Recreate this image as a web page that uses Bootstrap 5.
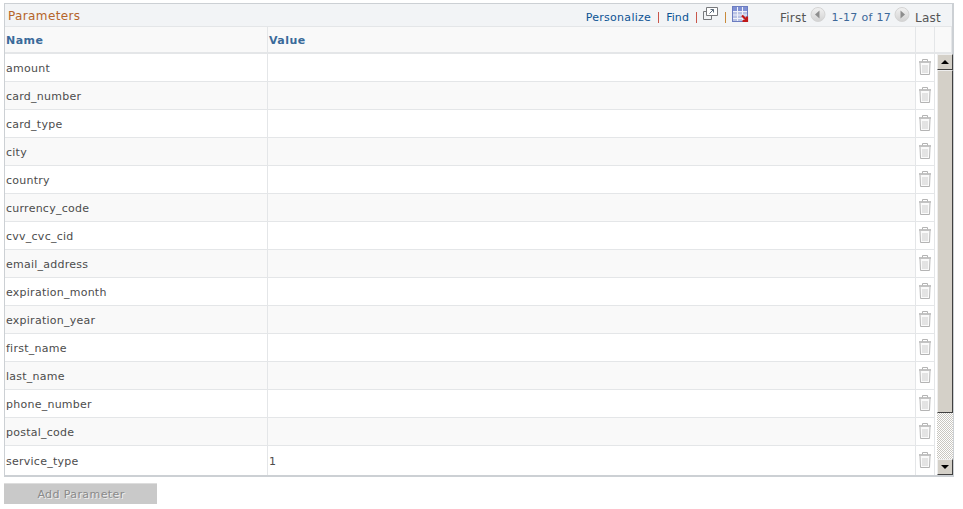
<!DOCTYPE html>
<html lang="en">
<head>
<meta charset="utf-8">
<title>Parameters</title>
<link href="https://cdn.jsdelivr.net/npm/bootstrap@5.3.0/dist/css/bootstrap.min.css" rel="stylesheet">
<style>
html,body{height:509px;overflow:hidden;background:#fff}
body{font-family:"DejaVu Sans",sans-serif;font-size:11px;color:#444;padding:3px 0 0 4px;margin:0}
.grid-box{width:950px;border:1px solid #ccd0d4;border-right-width:2px;border-bottom-width:2px}
.title-bar{height:23px;background:#f2f4f6;border-bottom:1px solid #e4e6e8;padding:0 11px 0 3px}
.title-text{color:#b5642a;font-size:12px;letter-spacing:.38px;line-height:24px}
.tools{height:22px;align-items:flex-start}
.tools a,.pg-count,.pg-word{display:block;margin-top:7px;line-height:14px}
.tools a{color:#0b5394;text-decoration:none;font-size:11px;letter-spacing:.28px}
.tools a.find-link{letter-spacing:.05px}
.sep-bar{display:block;width:1px;height:11px;margin:8px 7px 0 7px;background:#c9564a}
.sep-pop{margin-right:6px}
.sep-last{background:#c98a3a;margin-right:6px;margin-left:7px}
.pg-word{font-family:"DejaVu Sans",sans-serif;font-size:12px;color:#555;letter-spacing:.25px}
.pg-count{color:#3c6899;margin-left:5px;margin-right:3px;letter-spacing:.3px}
.pg-last{margin-left:5px}
.ic-pop{margin-top:3px}
.ic-grid{margin-top:2px;margin-right:31px}
.ic-circle{margin-top:3px}
.ic-first{margin-left:4px}
.ic-trash{margin-bottom:2px}
table.params{table-layout:fixed;width:947px;border-collapse:separate;border-spacing:0;margin:0}
table.params th,table.params td{padding:0 0 0 1px;border-right:1px solid #e4e6e8;vertical-align:middle;color:#4c4c4c;font-size:11px;line-height:16px;font-weight:400;letter-spacing:.25px;box-shadow:none;background:transparent}
table.params thead th{height:27px;padding-top:2px;background:#f9f9f9;color:#3a6a9a;font-weight:700;letter-spacing:.45px;border-bottom:2px solid #e4e6e8;box-shadow:none}
table.params tbody td{height:28px;padding-top:2px;border-bottom:1px solid #e4e6e8}
table.params tbody tr.alt td{background:#f9f9f9}
table.params tbody tr.last-row td{height:29px;border-bottom:0}
table.params td.trash-cell{padding:0;background:#fff}
table.params tbody tr.alt td.trash-cell{background:#fff}
table.params td.scroll-cell{padding:0;border:0;background:#fff;vertical-align:top}
.sbar{height:421px;width:16px;margin:0 0 0 2px;display:flex;flex-direction:column;background-color:#fff;background-image:repeating-conic-gradient(#c9c7c1 0 25%,#fff 0 50%);background-size:2px 2px}
.sbtn{flex:none;width:16px;height:16px;background:#d4d0c8;border:1px solid;border-color:#eee #404040 #404040 #eee;display:flex;align-items:center;justify-content:center}
.sthumb{flex:none;height:343px;width:16px;background:#d4d0c8;border:1px solid;border-color:#eee #404040 #404040 #eee}
button.add-btn:disabled{display:block;width:153px;height:21px;margin:6px 0 0 0;padding:2px 0 0 1px;border:0;border-top:1px solid #ddd;border-radius:0;background:#c9c9c9;color:#8a8a8a;font-size:11px;letter-spacing:.4px;text-shadow:1px 1px 0 #eee;line-height:18px;opacity:1}
</style>
</head>
<body>
<div class="grid-box">
  <div class="title-bar d-flex justify-content-between align-items-start">
    <span class="title-text">Parameters</span>
    <div class="tools d-flex">
      <a href="#">Personalize</a><span class="sep-bar"></span><a class="find-link" href="#">Find</a><span class="sep-bar sep-pop"></span>
      <svg class="ic-pop" width="15" height="14" viewBox="0 0 15 14" fill="none" stroke="#77797c"><path d="M3.500 .5h11v8h-11z" fill="#fff"/><path d="M3.500 4.500h-3v8h8v-4"/><path d="M6.500 6.500l4-4M7.500 2.500h3v3" stroke="#5a6a7a"/></svg>
      <span class="sep-bar sep-last"></span>
      <svg class="ic-grid" width="17" height="17" viewBox="0 0 17 17"><rect x=".5" y=".5" width="15" height="15" fill="#b9c3e4" stroke="#6b7cc0"/><rect x="1" y="1" width="14" height="4" fill="#7f90d4"/><path d="M1 5.500h14M1 9h14M1 12.500h14M5.500 1v14M10.500 1v14" stroke="#eef1f8"/><path d="M10 9.500l4.500 4.500M15 10.500V15h-4.500" stroke="#c01818" stroke-width="2.200" fill="none"/></svg>
      <span class="pg-word">First</span>
      <svg class="ic-circle ic-first" width="16" height="15" viewBox="0 0 16 15"><defs><linearGradient id="cg" x1="0" y1="0" x2="0" y2="1"><stop offset="0" stop-color="#f2f2f2"/><stop offset="1" stop-color="#d2d2d2"/></linearGradient></defs><circle cx="8" cy="7.500" r="7" fill="url(#cg)" stroke="#d4d4d4"/><path d="M9.500 3.500v8L5 7.500z" fill="#8d8d8d"/></svg>
      <span class="pg-count">1-17 of 17</span>
      <svg class="ic-circle" width="16" height="15" viewBox="0 0 16 15"><circle cx="8" cy="7.500" r="7" fill="url(#cg)" stroke="#d4d4d4"/><path d="M6.500 3.500v8l4.500-4z" fill="#8d8d8d"/></svg>
      <span class="pg-word pg-last">Last</span>
    </div>
  </div>
  <table class="table params">
    <colgroup><col style="width:263px"><col style="width:648px"><col style="width:19px"><col style="width:17px"></colgroup>
    <thead><tr><th>Name</th><th>Value</th><th></th><th></th></tr></thead>
    <tbody id="rows"></tbody>
  </table>
</div>
<button class="btn add-btn" disabled>Add Parameter</button>
<script>
const names=["amount","card_number","card_type","city","country","currency_code","cvv_cvc_cid","email_address","expiration_month","expiration_year","first_name","last_name","phone_number","postal_code","service_type"];
const trash='<svg class="d-block mx-auto ic-trash" width="14" height="16" viewBox="0 0 14 16" fill="none" stroke="#b4b4b4"><path d="M1 3h12" stroke-width="1.600"/><path d="M4.500 2.500V.5h5v2"/><path d="M2 4l.5 11.500h9L12 4" fill="#fafafa"/><path d="M5 6v8M7 6v8M9 6v8" stroke="#cdcdcd"/></svg>';
const arrowUp='<svg width="8" height="4" viewBox="0 0 8 4"><path d="M4 0l4 4H0z" fill="#000"/></svg>';
const arrowDn='<svg width="8" height="4" viewBox="0 0 8 4"><path d="M4 4l4-4H0z" fill="#000"/></svg>';
document.getElementById('rows').innerHTML=names.map((n,i)=>{
  const cls=(i%2?'alt':'')+(i==names.length-1?' last-row':'');
  const sc=i==0?`<td class="scroll-cell" rowspan="15"><div class="sbar"><div class="sbtn">${arrowUp}</div><div class="sthumb"></div><div class="flex-grow-1"></div><div class="sbtn">${arrowDn}</div></div></td>`:'';
  return `<tr class="${cls}"><td>${n}</td><td>${n=='service_type'?'1':''}</td><td class="trash-cell">${trash}</td>${sc}</tr>`;
}).join('');
</script>
<script src="https://cdn.jsdelivr.net/npm/bootstrap@5.3.0/dist/js/bootstrap.bundle.min.js"></script>
</body>
</html>
